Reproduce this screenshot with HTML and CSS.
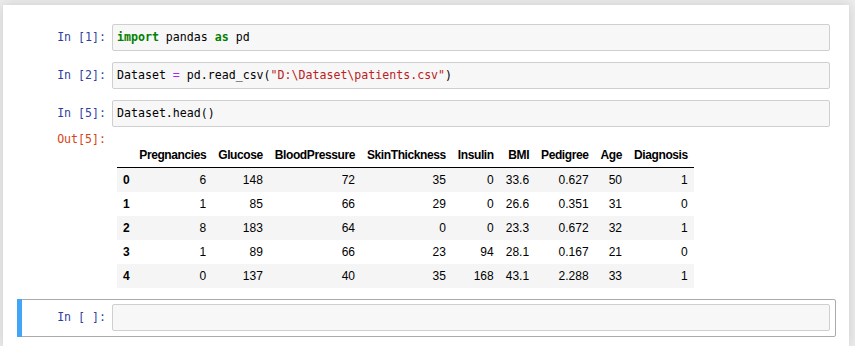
FILE: index.html
```html
<!DOCTYPE html>
<html lang="en">
<head>
    <meta charset="UTF-8">
    <meta name="viewport" content="width=device-width, initial-scale=1.0">
    <title>patients - Jupyter Notebook</title>
    <link rel="stylesheet" href="styles.css">
</head>
<body>
    <div class="notebook">
        <div class="cell">
            <div class="input">
                <div class="prompt in-prompt">In&nbsp;[1]:</div>
                <div class="input-area"><pre><span class="kw">import</span> pandas <span class="kw">as</span> pd</pre></div>
            </div>
        </div>

        <div class="cell">
            <div class="input">
                <div class="prompt in-prompt">In&nbsp;[2]:</div>
                <div class="input-area"><pre>Dataset <span class="op">=</span> pd.read_csv(<span class="str">"D:\Dataset\patients.csv"</span>)</pre></div>
            </div>
        </div>

        <div class="cell">
            <div class="input">
                <div class="prompt in-prompt">In&nbsp;[5]:</div>
                <div class="input-area"><pre>Dataset.head()</pre></div>
            </div>
            <div class="output">
                <div class="prompt out-prompt">Out[5]:</div>
                <div class="output-subarea">
                    <table class="dataframe">
                        <thead>
                            <tr>
                                <th></th>
                                <th>Pregnancies</th>
                                <th>Glucose</th>
                                <th>BloodPressure</th>
                                <th>SkinThickness</th>
                                <th>Insulin</th>
                                <th>BMI</th>
                                <th>Pedigree</th>
                                <th>Age</th>
                                <th>Diagnosis</th>
                            </tr>
                        </thead>
                        <tbody>
                            <tr><th>0</th><td>6</td><td>148</td><td>72</td><td>35</td><td>0</td><td>33.6</td><td>0.627</td><td>50</td><td>1</td></tr>
                            <tr><th>1</th><td>1</td><td>85</td><td>66</td><td>29</td><td>0</td><td>26.6</td><td>0.351</td><td>31</td><td>0</td></tr>
                            <tr><th>2</th><td>8</td><td>183</td><td>64</td><td>0</td><td>0</td><td>23.3</td><td>0.672</td><td>32</td><td>1</td></tr>
                            <tr><th>3</th><td>1</td><td>89</td><td>66</td><td>23</td><td>94</td><td>28.1</td><td>0.167</td><td>21</td><td>0</td></tr>
                            <tr><th>4</th><td>0</td><td>137</td><td>40</td><td>35</td><td>168</td><td>43.1</td><td>2.288</td><td>33</td><td>1</td></tr>
                        </tbody>
                    </table>
                </div>
            </div>
        </div>

        <div class="cell selected">
            <div class="input">
                <div class="prompt in-prompt">In&nbsp;[&nbsp;]:</div>
                <div class="input-area"><pre> </pre></div>
            </div>
        </div>
    </div>
</body>
</html>
```

FILE: styles.css
```css
body {
    margin: 0;
    height: 100vh;
    background-color: #eeeeee;
    font-family: "Liberation Sans", Arial, sans-serif;
    overflow: hidden;
}
.notebook {
    width: 846px;
    height: calc(100vh - 5px);
    box-sizing: border-box;
    margin: 5px 0 0 3px;
    padding: 14px 13px 0 14px;
    background-color: #fff;
    box-shadow: 0px 0px 12px 1px rgba(87, 87, 87, 0.2);
}
.cell {
    display: flex;
    flex-direction: column;
    border: 1px solid transparent;
    border-radius: 2px;
    padding: 4px 5px 5px 5px;
    position: relative;
}
.cell.selected {
    border-color: #ababab;
}
.cell.selected::before {
    content: '';
    position: absolute;
    left: -1px;
    top: -1px;
    width: 5px;
    height: calc(100% + 2px);
    background-color: #42a5f5;
}
.input, .output {
    display: flex;
}
.prompt {
    width: 89px;
    flex: none;
    box-sizing: border-box;
    padding: 5px 6px 0 0;
    text-align: right;
    font-family: "DejaVu Sans Mono", monospace;
    font-size: 11.6px;
    line-height: 17px;
}
.in-prompt {
    color: #303f9f;
}
.out-prompt {
    color: #d84315;
    padding-top: 4px;
}
.input-area {
    flex: 1;
    border: 1px solid #cfcfcf;
    border-radius: 2px;
    background-color: #f7f7f7;
    padding: 4px;
}
.input-area pre {
    margin: 0;
    font-family: "DejaVu Sans Mono", monospace;
    font-size: 11.6px;
    line-height: 17px;
    color: #000;
}
.kw {
    color: #008000;
    font-weight: bold;
}
.op {
    color: #aa22ff;
}
.str {
    color: #ba2121;
}
.output-subarea {
    flex: 1;
    padding: 5px 0 5px 5px;
}
table.dataframe {
    margin-top: 11px;
    border-collapse: collapse;
    border-spacing: 0;
    font-size: 12px;
    color: #000;
}
.dataframe th, .dataframe td {
    padding: 6px;
    line-height: 12px;
    text-align: right;
    vertical-align: middle;
    white-space: nowrap;
}
.dataframe th {
    font-weight: bold;
    letter-spacing: -0.4px;
}
.dataframe thead th {
    border-bottom: 1px solid #000;
}
.dataframe tbody th {
    text-align: left;
    padding-right: 4px;
}
.dataframe tbody tr:nth-child(odd) {
    background-color: #f5f5f5;
}
```
